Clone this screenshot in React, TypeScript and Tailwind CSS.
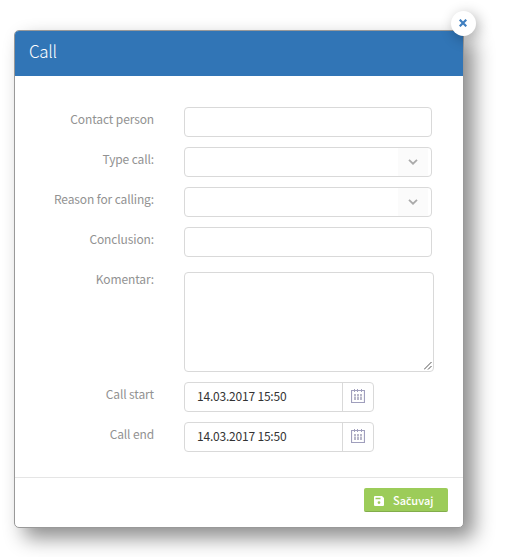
import type { ReactNode } from "react";

function Row({ label, tall, children }: { label: string; tall?: boolean; children: ReactNode }) {
  return (
    <div className="flex items-start">
      <label className={`w-[139px] shrink-0 text-right text-[#929292] text-[12px] tracking-[-0.12px] leading-[23px] ${tall ? "-mt-[5px]" : ""}`}>
        {label}
      </label>
      <div className="ml-[30px]">{children}</div>
    </div>
  );
}

function TextField() {
  return <div className="h-[30px] w-[248px] rounded-[4px] border border-[#d9d9d9] bg-white" />;
}

function SelectField() {
  return (
    <div className="flex h-[30px] w-[248px] justify-end rounded-[4px] border border-[#d9d9d9] bg-white pr-[3px]">
      <div className="flex w-[30px] items-center justify-center bg-[#fbfbfb]">
        <svg width="10" height="6" viewBox="0 0 10 6" fill="none" stroke="#aaa" strokeWidth="1.8">
          <path d="M1 .8 5 4.7 9 .8" />
        </svg>
      </div>
    </div>
  );
}

function CalendarIcon() {
  return (
    <svg width="14" height="14" viewBox="0 0 14 14" fill="none" stroke="#a09fbd">
      <path d="M.5 1.5h13v12H.5z" strokeWidth="1.2" />
      <path d="M3.5 0v3M6.5 0v3M10.5 0v3" />
      <path d="M4 5v2.5M7 5v2.5M10 5v2.5M4 8v3M7 8v3M10 8v3" strokeWidth="1.7" stroke="#acabc0" />
    </svg>
  );
}

function DateField({ value }: { value: string }) {
  return (
    <div className="flex h-[30px] w-[190px] rounded-[4px] border border-[#d9d9d9] bg-white">
      <div className="w-[158px] border-r border-[#d9d9d9] pl-3 text-[12px] leading-[26px] tracking-[-0.2px] text-[#333]">{value}</div>
      <div className="flex flex-1 justify-center pt-[6px]">
        <CalendarIcon />
      </div>
    </div>
  );
}

export default function App() {
  return (
    <div className="h-[557px] w-[506px] overflow-hidden bg-white pl-[14px] pt-[30px] font-['Noto_Sans_CJK_SC','Noto_Sans',sans-serif]">
      <div className="relative flex h-[498px] w-[450px] flex-col rounded-[5px] border border-[#999] bg-white shadow-[10px_10px_20px_rgba(0,0,0,0.45)]">
        <button className="absolute -top-[20px] right-[-13px] flex size-[25px] items-center justify-center rounded-full bg-white pb-[2px] pr-[2px] shadow-[3px_3px_14px_rgba(0,0,0,0.3)]">
          <svg width="8" height="8" viewBox="0 0 8 8" stroke="#3f7fc0" strokeWidth="2.2">
            <path d="M.7.7l6.6 6.6M7.3.7.7 7.3" />
          </svg>
        </button>
        <header className="h-[45px] shrink-0 rounded-t-[4px] bg-[#3175b6] pl-[14px] text-[17px] font-light leading-[40px] tracking-[-0.3px] text-white">Call</header>
        <main className="flex flex-1 flex-col gap-[10px] pt-[31px]">
          <Row label="Contact person"><TextField /></Row>
          <Row label="Type call:"><SelectField /></Row>
          <Row label="Reason for calling:"><SelectField /></Row>
          <Row label="Conclusion:"><TextField /></Row>
          <div className="pt-[5px]">
            <Row label="Komentar:" tall>
              <div className="flex h-[100px] w-[250px] items-end justify-end rounded-[4px] border border-[#d9d9d9] bg-white pb-px pr-px">
                <svg width="8" height="8" viewBox="0 0 8 8" stroke="#555" fill="none">
                  <path d="M0 7.5 7.5 0M4 7.5 7.5 4" />
                </svg>
              </div>
            </Row>
          </div>
          <Row label="Call start"><DateField value="14.03.2017 15:50" /></Row>
          <Row label="Call end"><DateField value="14.03.2017 15:50" /></Row>
        </main>
        <footer className="flex h-[50px] shrink-0 justify-end border-t border-[#e5e5e5] pr-[15px] pt-[10px]">
          <button className="flex h-[24px] w-[84px] items-center rounded-[2px] border-b border-[#82ad4b] bg-[#9ccc59] pl-[10px] text-[11px] font-medium leading-[22px] text-white">
            <svg className="mt-[2px]" width="10" height="10" viewBox="0 0 10 10" fill="white">
              <path fillRule="evenodd" d="M1 0h7l2 2v7a1 1 0 0 1-1 1H1a1 1 0 0 1-1-1V1a1 1 0 0 1 1-1zm.5 1.7v1.6h5V1.7zM5 5.2a1.4 1.4 0 1 0 0 2.8 1.4 1.4 0 0 0 0-2.8z" />
            </svg>
            <span className="ml-[9px] mt-[2px] whitespace-nowrap">Sa<span className="inline-block w-[5.3px] font-['Open_Sans',sans-serif] text-[10.5px] font-semibold">č</span>uvaj</span>
          </button>
        </footer>
      </div>
    </div>
  );
}
